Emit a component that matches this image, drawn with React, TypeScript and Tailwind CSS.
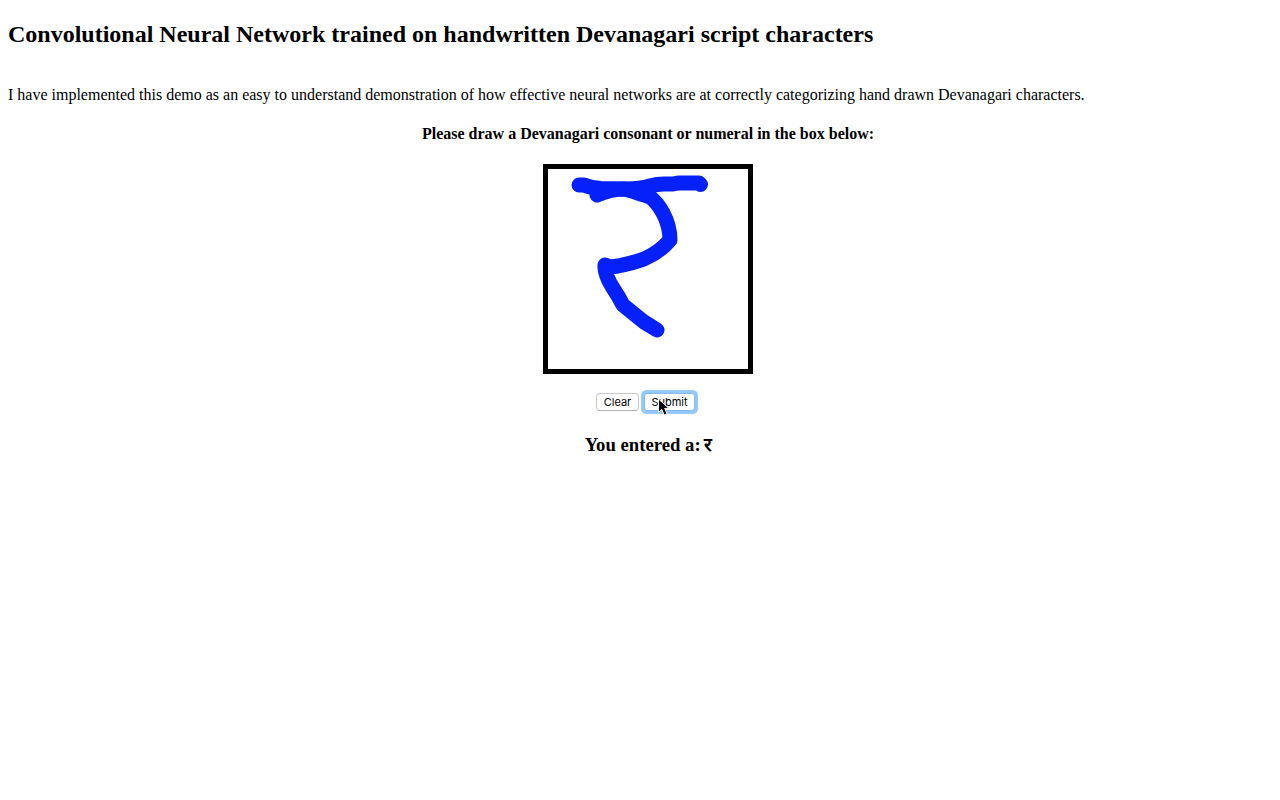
export default function App() {
  return (
    <main className="min-h-screen bg-white px-2 pt-5 font-['Liberation_Serif',serif] text-base leading-[18px] text-black">
      <h2 className="text-2xl leading-[28px] font-bold">Convolutional Neural Network trained on handwritten Devanagari script characters</h2>
      <p className="mt-[38px]">I have implemented this demo as an easy to understand demonstration of how effective neural networks are at correctly categorizing hand drawn Devanagari characters.</p>
      <section className="flex flex-col items-center pl-4">
        <h4 className="mt-[21px] font-bold">Please draw a Devanagari consonant or numeral in the box below:</h4>
        <div className="mt-[21px] h-[210px] w-[210px] border-[5px] border-black">
          <svg width="200" height="200" viewBox="548 169 200 200" fill="none" stroke="#0520f8" strokeWidth="15" strokeLinecap="round" strokeLinejoin="round">
            <path d="M579 185 L584 185 Q591 188 601 188.500 L626 189 Q640 189 650 186 Q657 184 664 184 L673 184 L678 183 L699 183 L700.500 184.500" />
            <path d="M597 195 Q612 189 624 189 Q630 190 650 197 Q657 202 663 213 Q670 226 670 240 Q660 252 644 259 Q633 263 618 266 L610 267 L605 265 Q604 274 613 288 Q619 297 623 305 L644 322 L649 325 L657 330" />
          </svg>
        </div>
        <div className="mt-[19px] mr-[5px] flex gap-[5px] font-['Inter',sans-serif] text-[11px] leading-4">
          <button className="h-[18px] w-[43px] rounded border border-[#c8c8c8] border-b-[#adadad] bg-white">Clear</button>
          <button className="relative h-[18px] w-[51px] rounded-[3px] border border-[#86bcef] bg-white shadow-[0_0_1px_2.5px_#92c7f7]">
            Submit
            <svg className="absolute top-[4px] left-[12px]" width="14" height="20" viewBox="0 0 14 20">
              <path d="M1.500 1 V14.500 L4.800 11.400 L7.200 17 L10 15.800 L7.700 10.400 H12 Z" fill="black" stroke="white" strokeWidth="1" />
            </svg>
          </button>
        </div>
        <h3 className="mt-[23px] ml-px text-[18.72px] leading-[22px] font-bold">You entered a:<span className="-ml-px"> र</span></h3>
      </section>
    </main>
  );
}
